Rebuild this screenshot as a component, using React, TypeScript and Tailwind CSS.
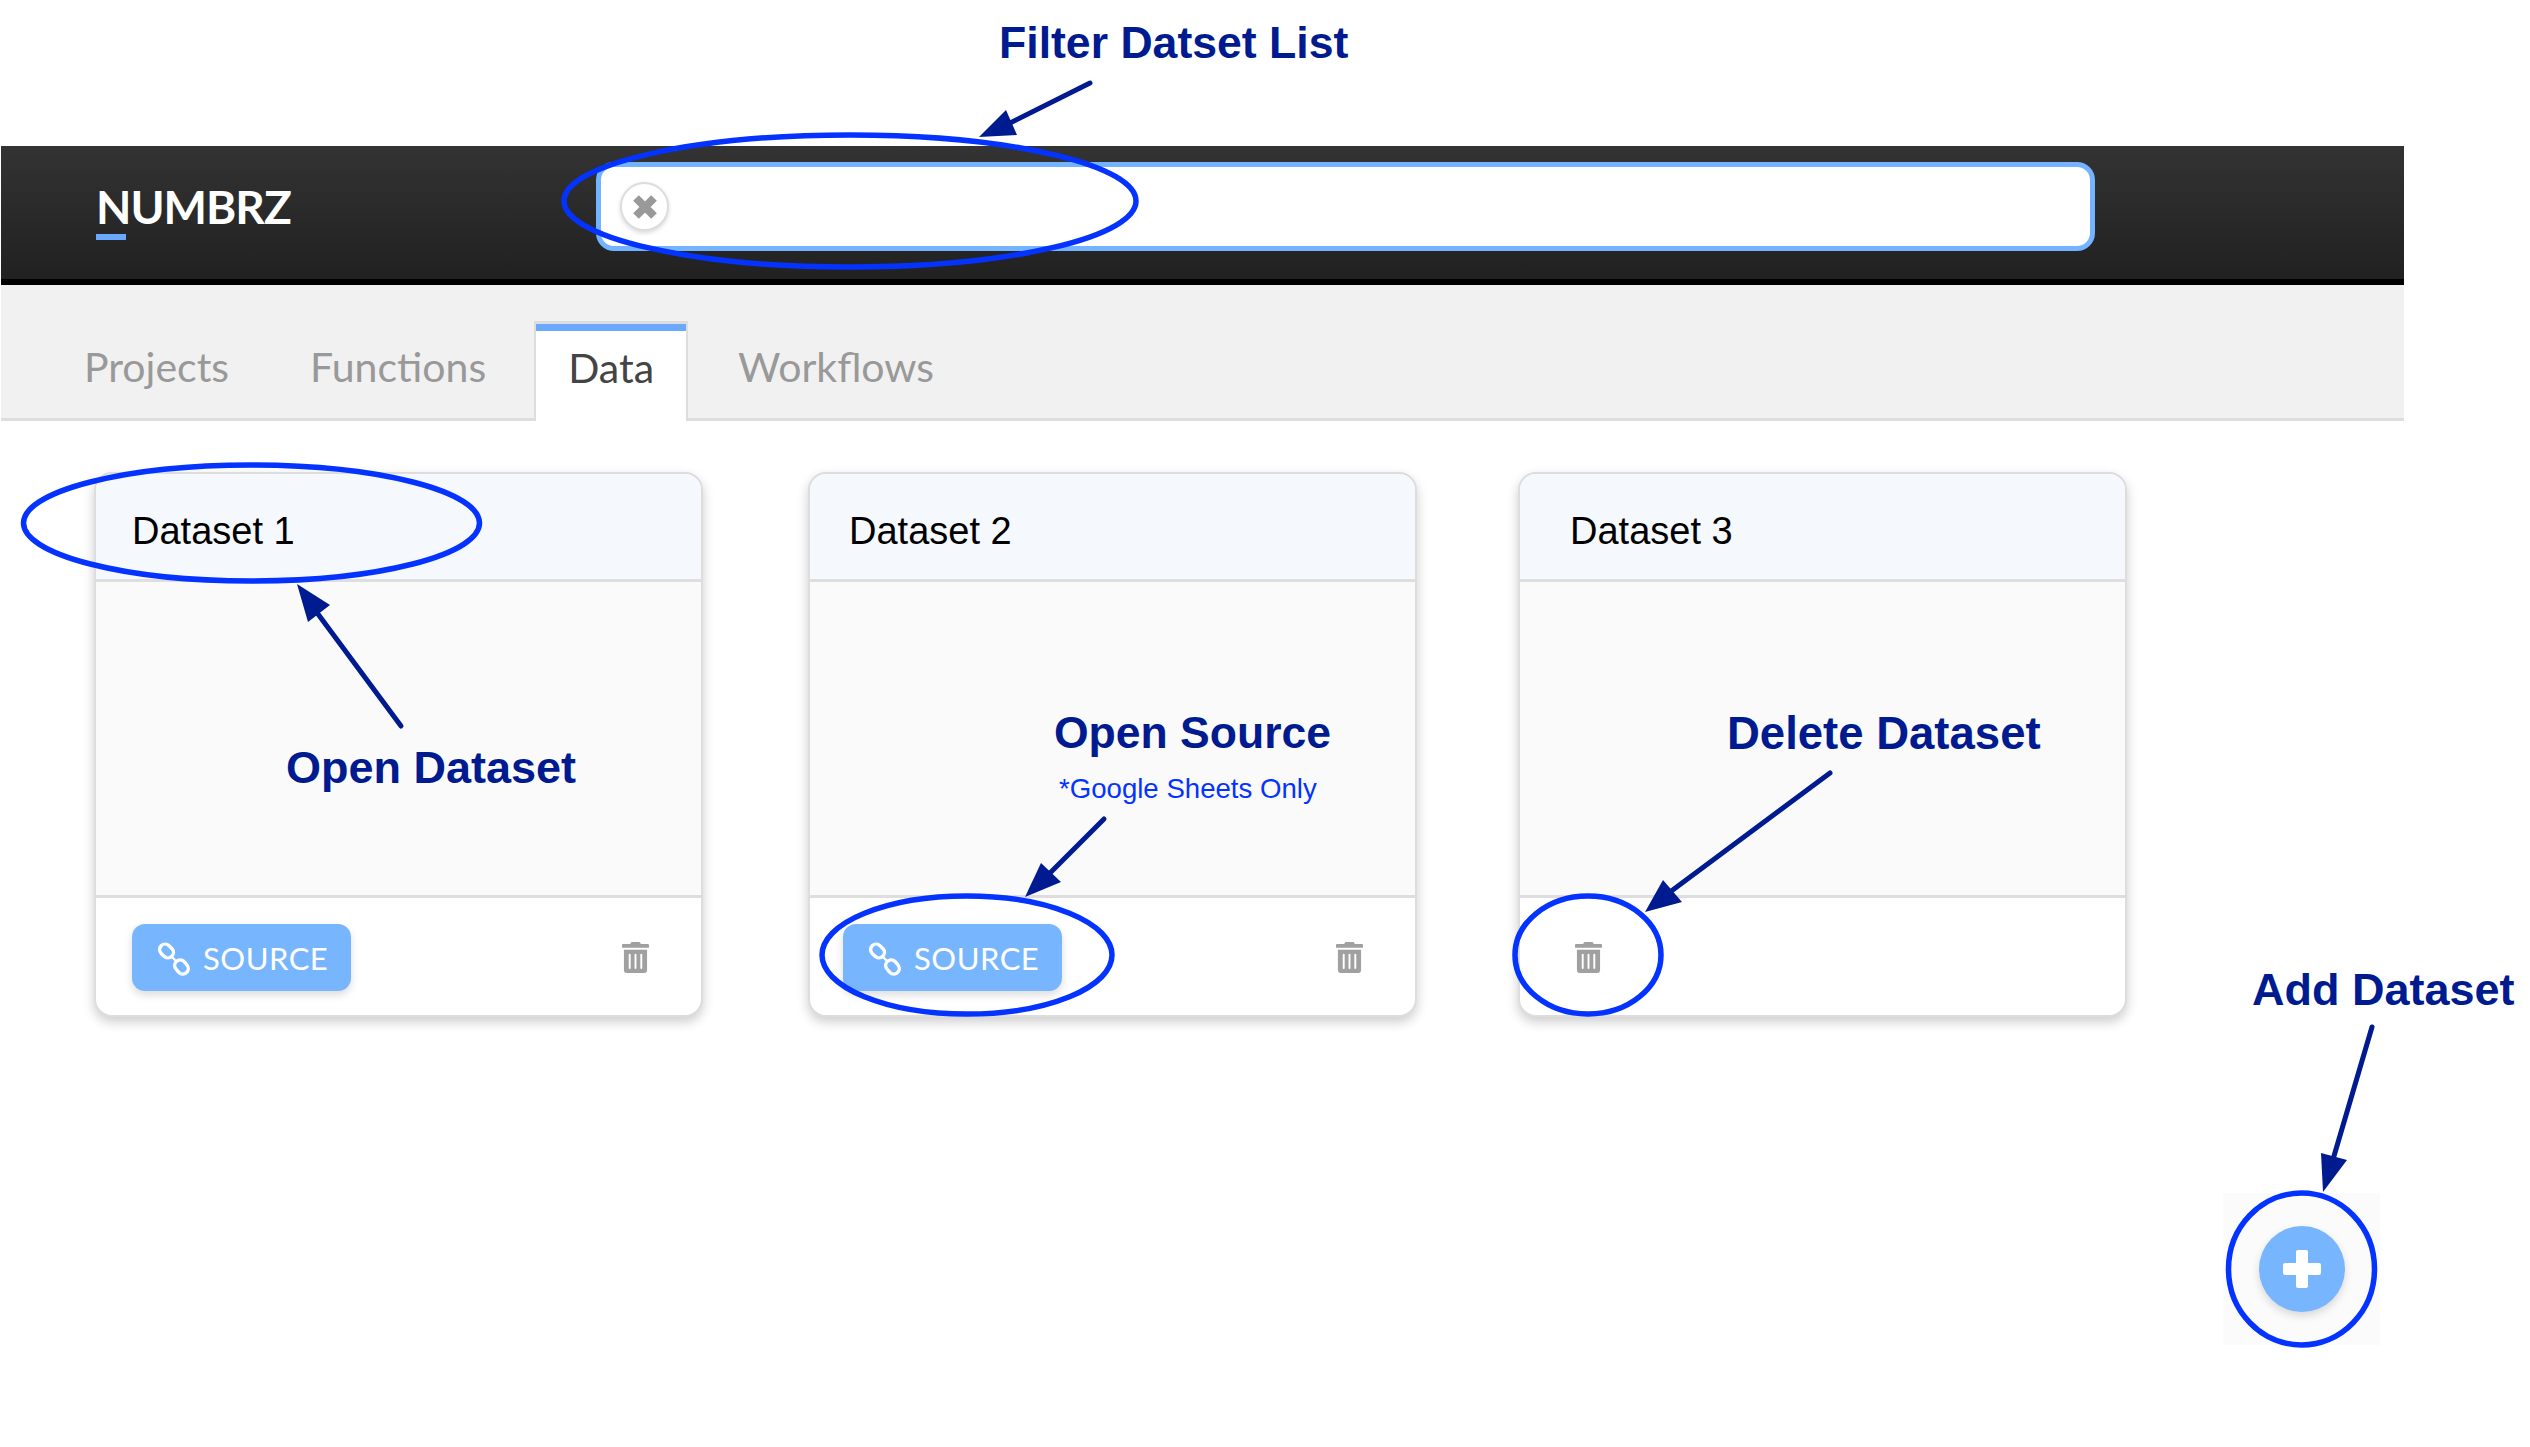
import { FaTrashAlt } from "react-icons/fa";

const tabs = ["Projects", "Functions", "Data", "Workflows"];

const cards = [
  { name: "Dataset 1", gap: "", title: "pl-[36px]", foot: "pl-[36px] pr-[52px]", source: true },
  { name: "Dataset 2", gap: "ml-[105px]", title: "pl-[39px]", foot: "pl-[33px] pr-[52px]", source: true },
  { name: "Dataset 3", gap: "ml-[101px]", title: "pl-[50px]", foot: "pl-[55px] pr-[52px]", source: false },
];

function ChainIcon() {
  return (
    <svg width="34" height="34" viewBox="0 0 34 34" fill="none" stroke="white" strokeWidth="3.4">
      <rect x="2" y="3.5" width="15" height="11" rx="5.5" transform="rotate(45 9.5 9)" />
      <rect x="17" y="19.5" width="15" height="11" rx="5.5" transform="rotate(50 24.5 25)" />
      <path d="M14 14 19.5 19.5" strokeWidth="2.4" />
    </svg>
  );
}

function Card({ name, gap, title, foot, source }: (typeof cards)[number]) {
  return (
    <div className={`${gap} h-[545px] w-[609px] overflow-hidden rounded-[18px] border-2 border-[#dddddd] bg-white shadow-[0_5px_12px_rgba(0,0,0,0.2)]`}>
      <div className={`flex h-[108px] items-center border-b-[3px] border-[#dedede] bg-[#f5f8fc] ${title} pt-[10px] font-['Liberation_Sans',sans-serif] text-[38px] text-black`}>
        {name}
      </div>
      <div className="h-[316px] border-b-[3px] border-[#dedede] bg-[#fafafa]" />
      <div className={`flex h-[117px] items-center justify-between ${foot} pt-[2px]`}>
        {source && (
          <button
            type="button"
            className="flex h-[67px] w-[219px] items-center gap-[12px] rounded-[13px] bg-[#77b6ff] pt-[2px] pl-[25px] font-['Lato',sans-serif] text-[31px] tracking-[0.5px] text-white shadow-[0_4px_8px_rgba(0,0,0,0.14)]"
          >
            <ChainIcon />
            SOURCE
          </button>
        )}
        <FaTrashAlt className="h-[31px] w-[27px] text-[#a0a0a0]" />
      </div>
    </div>
  );
}

function Markup() {
  const navy = "#001a8f";
  const blue = "#0433ff";
  const rings = [
    { cx: 850, cy: 201, rx: 286, ry: 66 },
    { cx: 251.5, cy: 523, rx: 228, ry: 58 },
    { cx: 967, cy: 955, rx: 145, ry: 59 },
    { cx: 1588, cy: 955, rx: 73, ry: 59 },
    { cx: 2301.5, cy: 1269, rx: 73, ry: 76 },
  ];
  const arrows = [
    { line: "1090,83 1000,128", head: "979,137 1006,110 1017,135" },
    { line: "401,726 315,610", head: "297,584 308,622 330,605" },
    { line: "1104,819 1050,873", head: "1025,897 1041,863 1061,882" },
    { line: "1830,773 1670,892", head: "1645,912 1663,880 1682,902" },
    { line: "2372,1027 2334,1156", head: "2323,1192 2321,1153 2347,1160" },
  ];
  return (
    <svg className="pointer-events-none absolute inset-0" width="2530" height="1447" fill="none">
      {rings.map((r) => (
        <ellipse key={r.cx} {...r} stroke={blue} strokeWidth="5.5" />
      ))}
      {arrows.map((a) => (
        <g key={a.head}>
          <polyline points={a.line} stroke={navy} strokeWidth="5" strokeLinecap="round" />
          <polygon points={a.head} fill={navy} />
        </g>
      ))}
    </svg>
  );
}

export default function App() {
  return (
    <div className="relative h-[1447px] w-[2530px] overflow-hidden bg-white pt-[146px] font-['Lato',sans-serif]">
      <header className="ml-px flex h-[139px] w-[2403px] items-start border-b-[6px] border-black bg-gradient-to-b from-[#333333] to-[#212121] pt-[16px]">
        <div className="flex h-[89px] w-[595px] items-center pl-[95px]">
          <div className="relative font-['Lato',sans-serif] text-[46px] leading-none font-bold tracking-[-1px] text-white">
            NUMBRZ
            <span className="absolute top-[50px] left-0 h-[6px] w-[30px] bg-[#6aa9ff]" />
          </div>
        </div>
        <div className="flex h-[89px] w-[1499px] items-center rounded-[18px] border-[5px] border-[#74b3ff] bg-white pl-[19px]">
          <button
            type="button"
            aria-label="Clear"
            className="flex h-[49px] w-[49px] items-center justify-center rounded-full border-2 border-[#dddddd] bg-white shadow-[0_2px_4px_rgba(0,0,0,0.15)]"
          >
            <svg width="26" height="26" viewBox="0 0 26 26" stroke="#999999" strokeWidth="8">
              <path d="M4 4 22 22M22 4 4 22" />
            </svg>
          </button>
        </div>
      </header>

      <nav className="ml-px flex h-[136px] w-[2403px] items-end gap-[15px] border-b-[3px] border-[#dddddd] bg-[#f1f1f1] pl-[50px] text-[41px]">
        {tabs.map((tab) =>
          tab === "Data" ? (
            <div
              key={tab}
              className="-mb-[3px] mr-[2px] flex h-[100px] flex-col border-x-2 border-t-[3px] border-[#dddddd] bg-white text-[#444444]"
            >
              <div className="h-[7px] bg-[#6ba9ff]" />
              <div className="flex flex-1 items-center px-[32px] pb-[17px]">{tab}</div>
            </div>
          ) : (
            <div key={tab} className="flex h-[97px] items-center px-[33px] pb-[6px] text-[#999999]">
              {tab}
            </div>
          ),
        )}
      </nav>

      <main className="mt-[51px] flex pl-[94px]">
        {cards.map((card) => (
          <Card key={card.name} {...card} />
        ))}
      </main>

      {/* floating add button */}
      <div className="absolute top-[1193px] left-[2223px] flex h-[152px] w-[157px] items-center justify-center bg-[#fbfbfb]">
        <button
          type="button"
          aria-label="Add"
          className="flex h-[86px] w-[86px] items-center justify-center rounded-full bg-[#77b6ff] shadow-[0_4px_8px_rgba(0,0,0,0.14)]"
        >
          <svg width="40" height="40" viewBox="0 0 40 40" fill="white">
            <rect x="14" y="1" width="12" height="38" rx="2" />
            <rect x="1" y="14" width="38" height="12" rx="2" />
          </svg>
        </button>
      </div>

      <Markup />

      <div className="font-['Liberation_Sans',sans-serif] text-[45px] leading-none font-bold text-[#001a8f]">
        <span className="absolute top-[21px] left-[999px] text-[44.6px]">Filter Datset List</span>
        <span className="absolute top-[745px] left-[286px]">Open Dataset</span>
        <span className="absolute top-[711px] left-[1054px] text-[44.5px]">Open Source</span>
        <span className="absolute top-[711px] left-[1727px] text-[45.5px]">Delete Dataset</span>
        <span className="absolute top-[967px] left-[2252px]">Add Dataset</span>
        <span className="absolute top-[775px] left-[1059px] text-[27.6px] font-normal text-[#0433ff]">*Google Sheets Only</span>
      </div>
    </div>
  );
}
